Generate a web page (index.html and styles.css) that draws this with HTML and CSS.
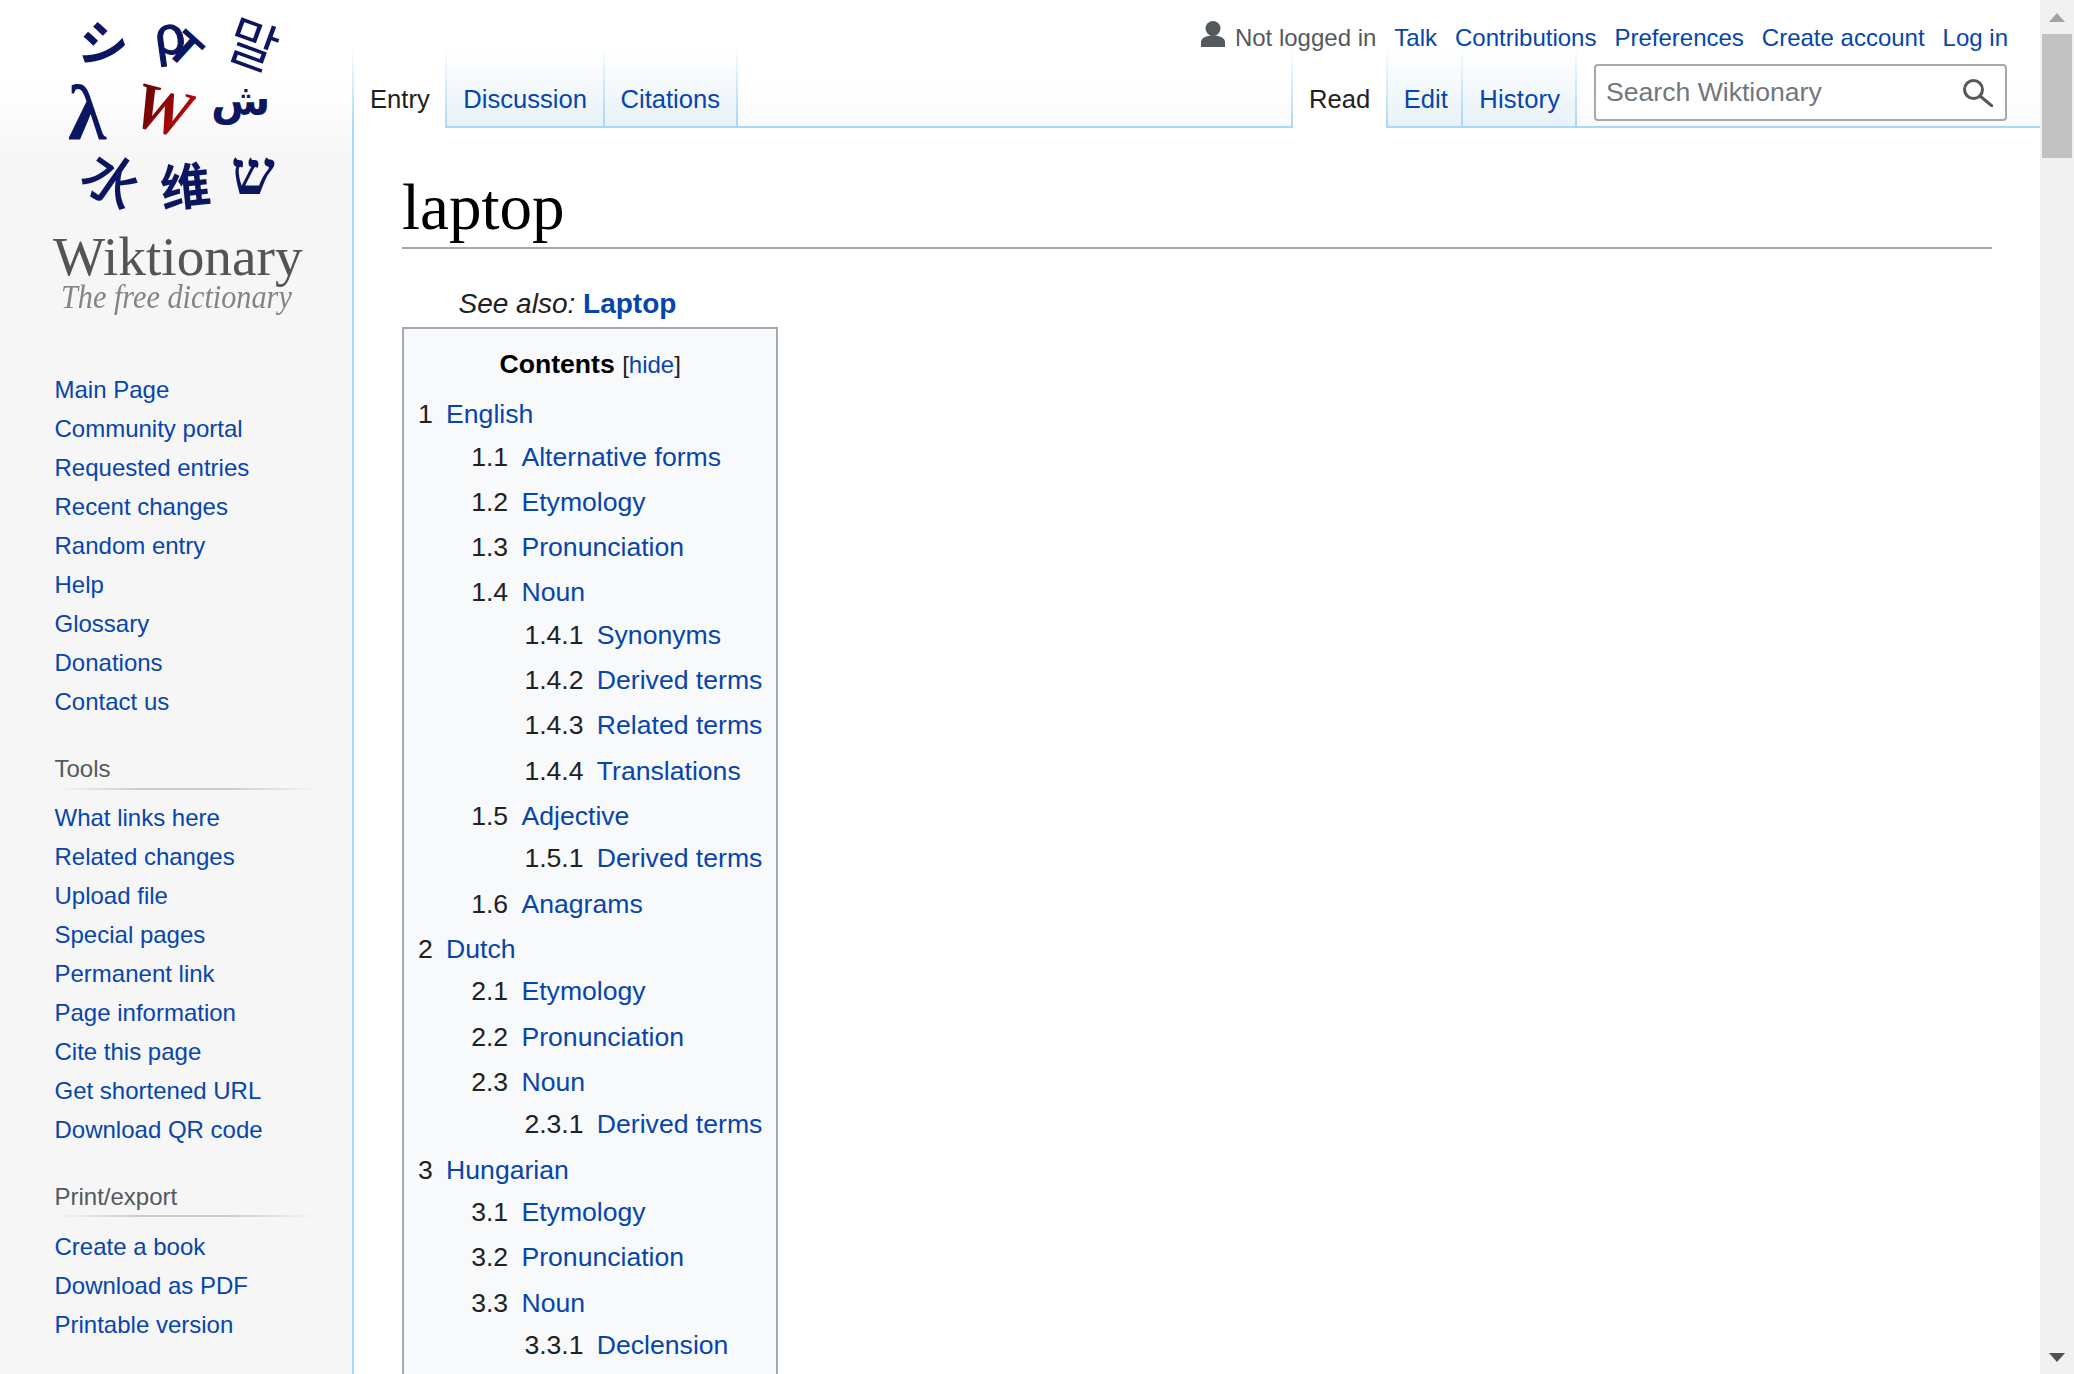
FILE: index.html
```html
<!DOCTYPE html>
<html lang="en">
<head>
<meta charset="utf-8">
<title>laptop - Wiktionary</title>
<link rel="stylesheet" href="styles.css">
</head>
<body>
<div class="shell">
  <aside class="sidebar">
    <div class="logo">
      <div class="glyphs">
        <span class="g g1">シ</span>
        <span class="g g2a">ρ</span>
        <span class="g g2b">T</span>
        <span class="g g3">말</span>
        <span class="g g4">λ</span>
        <span class="g g5">W</span>
        <span class="g g6">ش</span>
        <span class="g g7">水</span>
        <span class="g g8">维</span>
        <span class="g g9">ש</span>
      </div>
      <div class="wordmark">Wiktionary</div>
      <div class="tagline">The free dictionary</div>
    </div>
    <nav class="portal first">
      <a href="#">Main Page</a>
      <a href="#">Community portal</a>
      <a href="#">Requested entries</a>
      <a href="#">Recent changes</a>
      <a href="#">Random entry</a>
      <a href="#">Help</a>
      <a href="#">Glossary</a>
      <a href="#">Donations</a>
      <a href="#">Contact us</a>
    </nav>
    <nav class="portal">
      <h3>Tools</h3>
      <a href="#">What links here</a>
      <a href="#">Related changes</a>
      <a href="#">Upload file</a>
      <a href="#">Special pages</a>
      <a href="#">Permanent link</a>
      <a href="#">Page information</a>
      <a href="#">Cite this page</a>
      <a href="#">Get shortened URL</a>
      <a href="#">Download QR code</a>
    </nav>
    <nav class="portal">
      <h3>Print/export</h3>
      <a href="#">Create a book</a>
      <a href="#">Download as PDF</a>
      <a href="#">Printable version</a>
    </nav>
  </aside>
  <div class="main">
    <div class="personal">
      <svg class="user-icon" viewBox="0 0 24 26" width="24" height="26"><circle cx="12" cy="7.500" r="7.500"/><path d="M0 26v-5c0-4 5-6.500 12-6.500s12 2.500 12 6.500v5z"/></svg>
      <span class="anon">Not logged in</span>
      <a href="#">Talk</a>
      <a href="#">Contributions</a>
      <a href="#">Preferences</a>
      <a href="#">Create account</a>
      <a href="#">Log in</a>
    </div>
    <div class="navbar">
      <div class="tabs">
        <a class="tab active" href="#">Entry</a>
        <a class="tab" href="#">Discussion</a>
        <a class="tab" href="#">Citations</a>
      </div>
      <div class="nav-right">
        <div class="tabs">
          <a class="tab active" href="#">Read</a>
          <a class="tab tab-edit" href="#">Edit</a>
          <a class="tab tab-history" href="#">History</a>
        </div>
        <div class="search">
          <span class="placeholder">Search Wiktionary</span>
          <svg class="search-icon" viewBox="0 0 30 28" width="30" height="28"><circle cx="10.500" cy="10.500" r="9"/><path d="M17 17l12 10"/></svg>
        </div>
      </div>
    </div>
    <main class="content">
      <h1>laptop</h1>
      <p class="see-also">See also: <a href="#">Laptop</a></p>
      <div class="toc">
        <div class="toc-title"><strong>Contents</strong> <span class="toc-toggle">[<a href="#">hide</a>]</span></div>
        <ul>
          <li><span class="n">1</span><a href="#">English</a>
            <ul>
              <li><span class="n">1.1</span><a href="#">Alternative forms</a></li>
              <li><span class="n">1.2</span><a href="#">Etymology</a></li>
              <li><span class="n">1.3</span><a href="#">Pronunciation</a></li>
              <li><span class="n">1.4</span><a href="#">Noun</a>
                <ul>
                  <li><span class="n">1.4.1</span><a href="#">Synonyms</a></li>
                  <li><span class="n">1.4.2</span><a href="#">Derived terms</a></li>
                  <li><span class="n">1.4.3</span><a href="#">Related terms</a></li>
                  <li><span class="n">1.4.4</span><a href="#">Translations</a></li>
                </ul>
              </li>
              <li><span class="n">1.5</span><a href="#">Adjective</a>
                <ul>
                  <li><span class="n">1.5.1</span><a href="#">Derived terms</a></li>
                </ul>
              </li>
              <li><span class="n">1.6</span><a href="#">Anagrams</a></li>
            </ul>
          </li>
          <li><span class="n">2</span><a href="#">Dutch</a>
            <ul>
              <li><span class="n">2.1</span><a href="#">Etymology</a></li>
              <li><span class="n">2.2</span><a href="#">Pronunciation</a></li>
              <li><span class="n">2.3</span><a href="#">Noun</a>
                <ul>
                  <li><span class="n">2.3.1</span><a href="#">Derived terms</a></li>
                </ul>
              </li>
            </ul>
          </li>
          <li><span class="n">3</span><a href="#">Hungarian</a>
            <ul>
              <li><span class="n">3.1</span><a href="#">Etymology</a></li>
              <li><span class="n">3.2</span><a href="#">Pronunciation</a></li>
              <li><span class="n">3.3</span><a href="#">Noun</a>
                <ul>
                  <li><span class="n">3.3.1</span><a href="#">Declension</a></li>
                </ul>
              </li>
            </ul>
          </li>
        </ul>
      </div>
    </main>
  </div>
  <div class="scrollbar">
    <div class="arrow up"></div>
    <div class="thumb"></div>
    <div class="track"></div>
    <div class="arrow down"></div>
  </div>
</div>
</body>
</html>
```
FILE: styles.css
```css
* { box-sizing: border-box; }
html, body { margin: 0; height: 100%; overflow: hidden; }
body { font-family: "Liberation Sans", Arial, sans-serif; color: #202122; }
a { color: #0645ad; text-decoration: none; }

.shell {
  display: flex;
  height: 1374px;
  overflow: hidden;
  background: linear-gradient(#fff 80px, #f6f6f6 160px);
}

/* Sidebar */
.sidebar { width: 352px; flex: none; }
.logo { height: 320px; }
.glyphs { position: relative; height: 232px; color: #0b1560; }
.g { position: absolute; line-height: 1; white-space: nowrap; }
.g1 { left: 79px; top: 16px; font: 700 50px/1 "Noto Sans CJK JP", sans-serif; transform: rotate(10deg); }
.g2a { left: 154px; top: 8px; font: 400 54px/1 "Liberation Sans", sans-serif; -webkit-text-stroke: 1.200px #0b1560; transform: rotate(-8deg); }
.g2b { left: 171px; top: 26px; font: 700 46px/1 "Liberation Sans", sans-serif; transform: rotate(42deg); }
.g3 { left: 229px; top: 15px; font: 400 54px/1 "Noto Sans CJK KR", sans-serif; transform: rotate(20deg); }
.g4 { left: 68px; top: 74px; font: 700 78px/1 "Liberation Serif", serif; }
.g5 {
  left: 133px; top: 77px; font: italic 700 66px/1 "Liberation Serif", serif;
  background: linear-gradient(100deg, #5a0505, #c00a0a);
  -webkit-background-clip: text; background-clip: text; color: transparent;
  transform: rotate(14deg);
}
.g6 { left: 211px; top: 79px; font: 700 43px/1 "DejaVu Sans", sans-serif; }
.g7 { left: 86px; top: 150px; font: 500 56px/1 "Noto Sans CJK SC", sans-serif; transform: rotate(35deg); }
.g8 { left: 160px; top: 158px; font: 700 50px/1 "Noto Sans CJK SC", sans-serif; transform: rotate(-6deg); }
.g9 { left: 231px; top: 142px; font: 700 62px/1 "Liberation Serif", serif; }
.wordmark {
  font: 400 55.300px/50px "Liberation Serif", serif;
  color: #545454;
  padding-left: 53px;
  white-space: nowrap;
}
.tagline {
  font: italic 400 34px/30px "Liberation Serif", serif;
  color: #848484;
  margin-left: 61px;
  white-space: nowrap;
  transform: scaleX(.89);
  transform-origin: left center;
}

.portal { padding: 0 36px 0 54.500px; margin-top: 30px; font-size: 24px; }
.portal.first { margin-top: 50px; }
.portal a { display: block; height: 39px; line-height: 39px; white-space: nowrap; }
.portal h3 {
  margin: 0 0 8.100px;
  font-size: 24px;
  font-weight: 400;
  color: #54595d;
  line-height: 36px;
  padding-bottom: .5px;
  border-bottom: 2px solid transparent;
  border-image: linear-gradient(to right, rgba(200,204,209,0), #c8ccd1 33%, #c8ccd1 66%, rgba(200,204,209,0)) 1;
}
.portal:last-child h3 { margin-bottom: 9.600px; }

/* Main column */
.main { flex: 1; min-width: 0; display: flex; flex-direction: column; }
.personal {
  position: relative;
  z-index: 1;
  height: 48px;
  padding: 27px 32px 0 0;
  display: flex;
  justify-content: flex-end;
  align-items: center;
  gap: 18px;
  font-size: 24px;
  line-height: 22px;
  white-space: nowrap;
}
.user-icon { fill: #54595d; margin-right: -8px; margin-top: -7px; }
.anon { color: #54595d; }

.navbar {
  height: 80px;
  flex: none;
  display: flex;
  justify-content: space-between;
  border-bottom: 2px solid #a7d7f9;
}
.nav-right { display: flex; align-items: flex-start; }
.tabs { display: flex; align-items: flex-start; }
.tab {
  height: 78px;
  padding: 36px 15.500px 0 16px;
  font-size: 25.600px;
  line-height: 30px;
  white-space: nowrap;
  background: linear-gradient(#fff, #e8f2f8);
  border-right: 2px solid;
  border-image: linear-gradient(rgba(167,215,249,0), #a7d7f9) 1;
}
.tab.active {
  height: 80px;
  background: #fff;
  color: #202122;
  border-left: 2px solid;
}
.tab-edit { padding-right: 13.500px; }
.tab-history { letter-spacing: .2px; padding-right: 14.700px; }
.search {
  width: 413px;
  height: 57px;
  margin: 16px 33px 0 17px;
  padding: 0 12px 0 10px;
  display: flex;
  align-items: center;
  justify-content: space-between;
  background: #fff;
  border: 2px solid #a2a9b1;
  border-radius: 4px;
  font-size: 26.600px;
  color: #72777d;
}
.search-icon { fill: none; stroke: #54595d; stroke-width: 3; stroke-linecap: round; }

.content {
  flex: 1;
  min-height: 0;
  overflow: hidden;
  background: #fff;
  border-left: 2px solid #a7d7f9;
  padding: 40px 48px 0;
  font-size: 28px;
}
h1 {
  margin: 0;
  font: 400 65px/79px "Liberation Serif", serif;
  color: #000;
  border-bottom: 2px solid #a2a9b1;
}
.see-also { margin: 32px 0 1px; padding-left: 56.500px; font-style: italic; line-height: 45px; }
.see-also a { font-style: normal; font-weight: 700; }

.toc {
  width: fit-content;
  padding: 14px 14px 80px;
  background: #f8f9fa;
  border: 2px solid #a2a9b1;
  font-size: 26.600px;
  line-height: 42.560px;
}
.toc-title { text-align: center; margin-bottom: 6.500px; color: #000; }
.toc-toggle { font-size: 24px; color: #202122; }
.toc ul { list-style: none; margin: 0; padding: 0; }
.toc ul ul { margin-left: 53.200px; }
.toc li { margin-bottom: 2.660px; }
.n { padding-right: 13.300px; color: #202122; }

/* Scrollbar */
.scrollbar { width: 34px; flex: none; display: flex; flex-direction: column; background: #f1f1f1; }
.arrow { height: 34px; flex: none; display: flex; align-items: center; justify-content: center; }
.arrow::before { content: ""; border-left: 8px solid transparent; border-right: 8px solid transparent; }
.arrow.up::before { border-bottom: 9px solid #a3a3a3; }
.arrow.down::before { border-top: 9px solid #505050; }
.thumb { height: 124px; margin: 0 2px; background: #c1c1c1; flex: none; }
.track { flex: 1; }
```
